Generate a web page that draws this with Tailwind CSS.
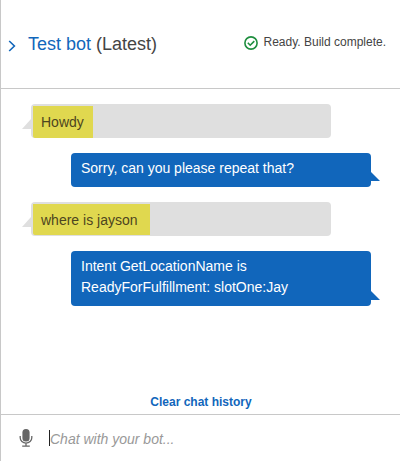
<!DOCTYPE html>
<html lang="en">
<head>
<meta charset="utf-8">
<title>Test bot</title>
<script src="https://cdn.jsdelivr.net/npm/@tailwindcss/browser@4"></script>
</head>
<body class="bg-white font-['Liberation_Sans',Arial,sans-serif] text-[#444]">
<div class="flex h-[461px] w-[400px] flex-col overflow-hidden border-l border-[#c8c8c8]">
  <header class="flex h-[89px] shrink-0 items-center border-b border-[#c8c8c8] pl-[7px] pr-[14px]">
    <svg class="mt-[3px] h-[12px] w-[8px]" viewBox="0 0 8 12" fill="none" stroke="#1166bb" stroke-width="1.6"><path d="M1.2 1 6.4 6l-5.2 5"/></svg>
    <h1 class="ml-[12px] whitespace-nowrap text-[18px] leading-[24px]"><span class="text-[#1166bb]">Test bot</span> (Latest)</h1>
    <div class="ml-auto flex items-center whitespace-nowrap text-[12px] leading-[18px]">
      <svg class="-mt-[2px] mr-[5px] h-[14px] w-[14px]" viewBox="0 0 14 14" fill="none" stroke="#1e8e3e"><circle cx="7" cy="7" r="6.1" stroke-width="1.6"/><path d="m3.8 6.8 2.4 2.4 4.1-4.1" stroke-width="1.6"/></svg>
      <span class="-mt-[4px]">Ready. Build complete.</span>
    </div>
  </header>
  <main class="flex grow flex-col gap-[15px] pt-[15px] text-[14px] leading-[21px]">
    <div class="relative ml-[30px] h-[34px] w-[300px] rounded-[4px] bg-[#dfdfdf] pl-[2px] pt-[2px]">
      <svg class="absolute -left-[9px] top-[15px] h-[10px] w-[9px]" viewBox="0 0 9 10"><path d="M9 0v10H0z" fill="#dfdfdf"/></svg>
      <div class="h-[32px] w-[60px] rounded-bl-[2px] bg-[#e0d84f] pl-[8px] pt-[6px] text-[#4d4520]">Howdy</div>
    </div>
    <div class="relative ml-[70px] h-[34px] w-[300px] rounded-[4px] bg-[#1166bb] pl-[10px] pt-[5px] text-white">
      Sorry, can you please repeat that?
      <svg class="absolute -right-[9px] top-[19px] h-[9px] w-[9px]" viewBox="0 0 9 9"><path d="M0 0v9h9z" fill="#1166bb"/></svg>
    </div>
    <div class="relative ml-[30px] h-[34px] w-[300px] rounded-[4px] bg-[#dfdfdf] pl-[2px] pt-[2px]">
      <svg class="absolute -left-[9px] top-[15px] h-[10px] w-[9px]" viewBox="0 0 9 10"><path d="M9 0v10H0z" fill="#dfdfdf"/></svg>
      <div class="h-[31px] w-[117px] rounded-bl-[2px] bg-[#e0d84f] pl-[8px] pt-[6px] text-[#4d4520]">where is jayson</div>
    </div>
    <div class="relative ml-[70px] h-[55px] w-[300px] rounded-[4px] bg-[#1166bb] pl-[10px] pt-[5px] text-white">
      Intent GetLocationName is<br>ReadyForFulfillment: slotOne:Jay
      <svg class="absolute -right-[9px] top-[40px] h-[9px] w-[9px]" viewBox="0 0 9 9"><path d="M0 0v9h9z" fill="#1166bb"/></svg>
    </div>
    <button class="mt-auto mb-[3px] pl-px text-center text-[12px] leading-[18px] font-bold text-[#1166bb]">Clear chat history</button>
  </main>
  <footer class="flex h-[47px] shrink-0 items-center border-t border-[#c8c8c8] pl-[18px]">
    <svg class="h-[18px] w-[14px]" viewBox="0 0 14 18"><rect x="3.4" y="0" width="7.2" height="12.4" rx="3.5" fill="#666"/><path d="M1.2 7v1.8a5.8 5.3 0 0 0 11.6 0V7M7 14v3M3.2 17.2h7.6" fill="none" stroke="#666" stroke-width="1.3"/></svg>
    <div class="ml-[16px] h-[16px] w-px bg-[#222]"></div>
    <span class="mt-[2px] text-[14px] leading-[21px] text-[#999] italic">Chat with your bot...</span>
  </footer>
</div>
</body>
</html>
